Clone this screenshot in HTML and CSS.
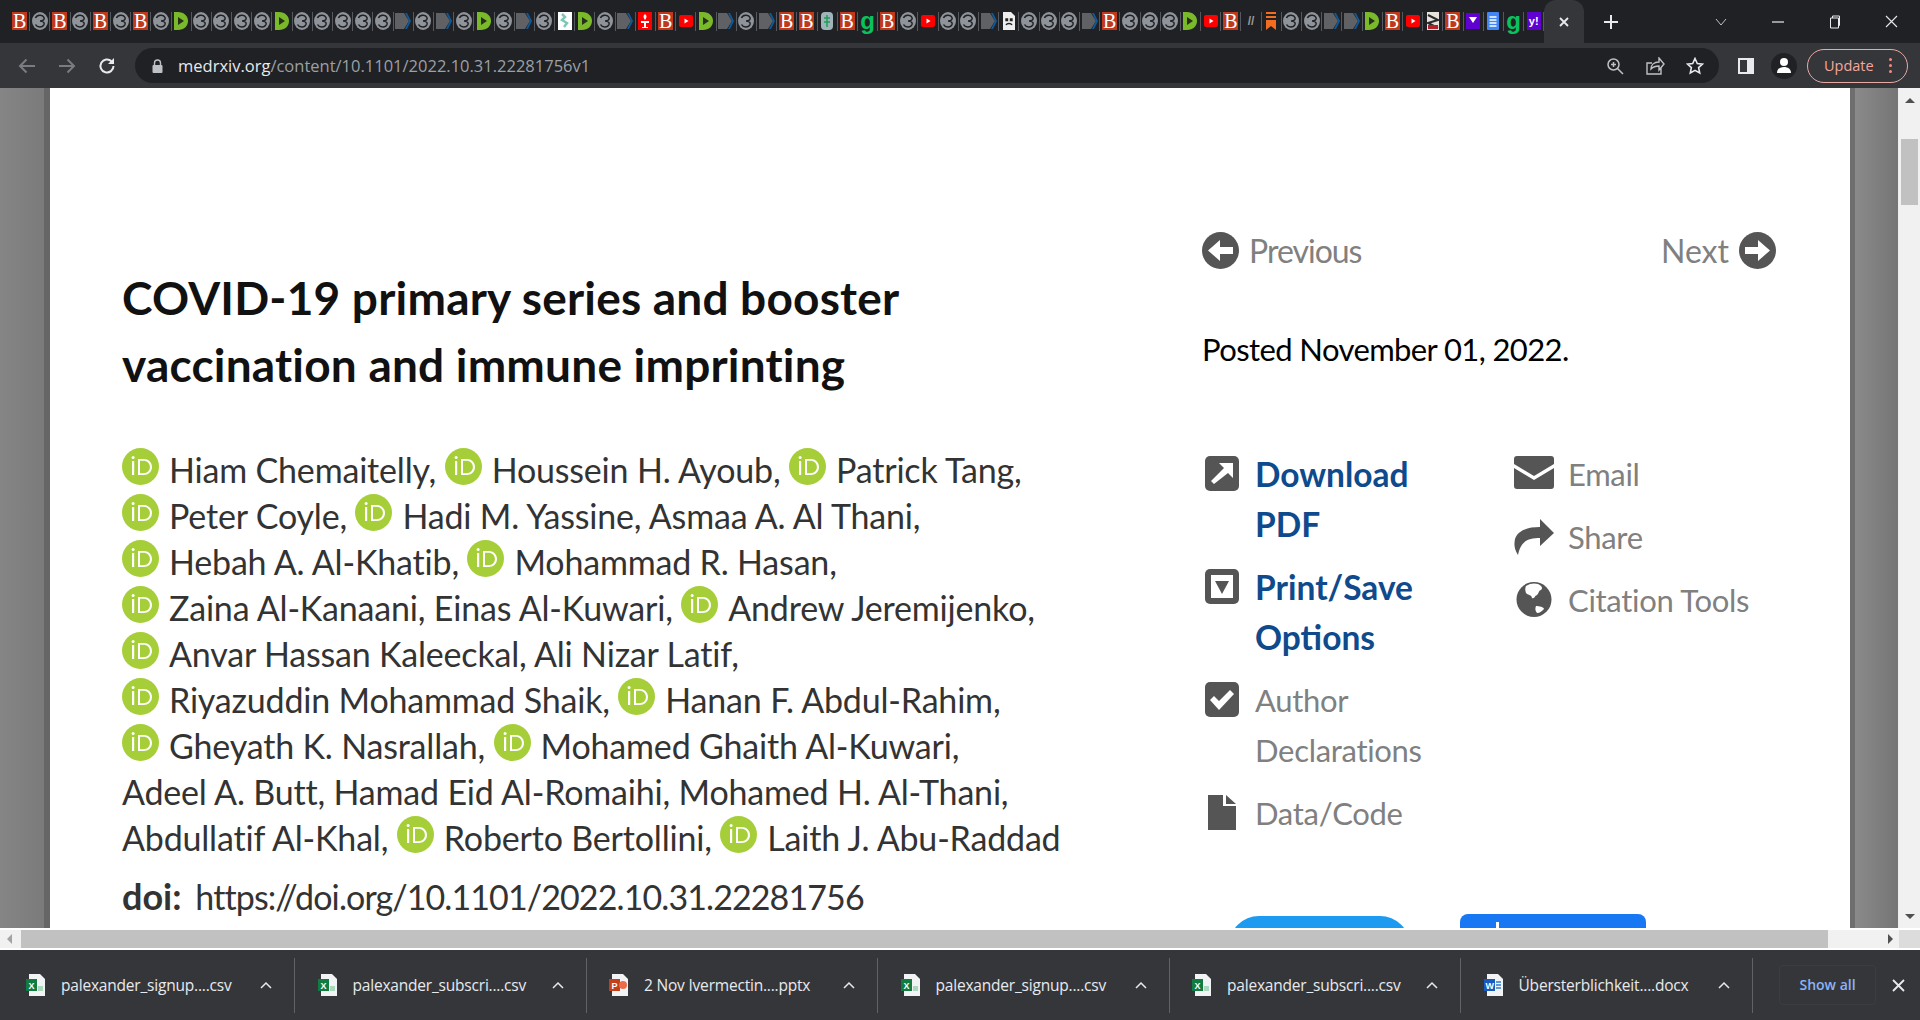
FILE: index.html
```html
<!DOCTYPE html>
<html lang="en">
<head>
  <meta charset="UTF-8" />
  <title>COVID-19 primary series and booster vaccination and immune imprinting</title>
  <link rel="stylesheet" href="styles.css">
</head>
<body>
  <svg class="defs" width="0" height="0">
    <symbol id="swirl" viewBox="0 0 16 18">
      <ellipse cx="8" cy="9" rx="8" ry="9" fill="#8f939a"/>
      <path d="M3.500 6c1-3 7-4 8.500-.5.800 2-1 3.500-4 3.500 3 0 4.800 1.500 4 3.500C10.500 16 5 15.500 3.500 12.500" fill="none" stroke="#202124" stroke-width="1.500"/>
    </symbol>
    <symbol id="dgreen" viewBox="0 0 16 18">
      <path d="M1 0h4c6 0 10 4 10 9s-4 9-10 9H1z" fill="#7ab929"/>
      <path d="M5 5l6 4-6 4z" fill="#26301a"/>
    </symbol>
    <symbol id="chev" viewBox="0 0 16 18">
      <path d="M0 1h9l5 8-5 8H0z" fill="#5f6164"/>
      <path d="M10 1h2l4 8-4 8h-2l4-8z" fill="#0e5a9a"/>
    </symbol>
    <symbol id="yt" viewBox="0 0 16 18">
      <rect x="1" y="3" width="14" height="12" rx="2" fill="#f00"/>
      <path d="M6.500 6.500l4 2.500-4 2.500z" fill="#fff"/>
    </symbol>
    <symbol id="orcid" viewBox="0 0 37 37">
      <circle cx="18.500" cy="18.500" r="18.500" fill="#a6ce39"/>
      <rect x="10" y="13" width="2.200" height="14" fill="#fff"/>
      <circle cx="11.100" cy="9.500" r="1.500" fill="#fff"/>
      <path d="M16 11h5.500c5 0 8.500 3.500 8.500 8s-3.500 8-8.500 8H16zM18 12.800v12.400h3.300c3.900 0 6.600-2.600 6.600-6.200s-2.700-6.200-6.600-6.200z" fill="#fff"/>
    </symbol>
    <symbol id="xls" viewBox="0 0 20 22">
      <path d="M3 0h11l5 5v17H3z" fill="#f1f3f4"/>
      <rect x="0" y="5" width="11" height="12" fill="#107c41"/>
      <path d="M12 12h5v5h-5z" fill="#a9d8bd"/>
    </symbol>
    <symbol id="caret" viewBox="0 0 12 8">
      <path d="M1 7l5-5 5 5" fill="none" stroke="#e8eaed" stroke-width="1.500"/>
    </symbol>
  </svg>

  <div class="tabstrip">
    <div class="favs">
      <span class="fav"><b class="ico-b">B</b></span><span class="fav"><svg><use href="#swirl"/></svg></span>
      <span class="fav"><b class="ico-b">B</b></span><span class="fav"><svg><use href="#swirl"/></svg></span>
      <span class="fav"><b class="ico-b">B</b></span><span class="fav"><svg><use href="#swirl"/></svg></span>
      <span class="fav"><b class="ico-b">B</b></span><span class="fav"><svg><use href="#swirl"/></svg></span>
      <span class="fav"><svg><use href="#dgreen"/></svg></span><span class="fav"><svg><use href="#swirl"/></svg></span>
      <span class="fav"><svg><use href="#swirl"/></svg></span><span class="fav"><svg><use href="#swirl"/></svg></span>
      <span class="fav"><svg><use href="#swirl"/></svg></span><span class="fav"><svg><use href="#dgreen"/></svg></span>
      <span class="fav"><svg><use href="#swirl"/></svg></span><span class="fav"><svg><use href="#swirl"/></svg></span>
      <span class="fav"><svg><use href="#swirl"/></svg></span><span class="fav"><svg><use href="#swirl"/></svg></span>
      <span class="fav"><svg><use href="#swirl"/></svg></span><span class="fav"><svg><use href="#chev"/></svg></span>
      <span class="fav"><svg><use href="#swirl"/></svg></span><span class="fav"><svg><use href="#chev"/></svg></span>
      <span class="fav"><svg><use href="#swirl"/></svg></span><span class="fav"><svg><use href="#dgreen"/></svg></span>
      <span class="fav"><svg><use href="#swirl"/></svg></span><span class="fav"><svg><use href="#chev"/></svg></span>
      <span class="fav"><svg><use href="#swirl"/></svg></span>
      <span class="fav"><svg viewBox="0 0 16 18"><rect x="1" y="0" width="14" height="18" fill="#fff"/><path d="M5 2l3 3-3 3 5 3-3 4" fill="none" stroke="#7cc8b4" stroke-width="2.500"/></svg></span>
      <span class="fav"><svg><use href="#dgreen"/></svg></span><span class="fav"><svg><use href="#swirl"/></svg></span>
      <span class="fav"><svg><use href="#chev"/></svg></span>
      <span class="fav"><svg viewBox="0 0 16 18"><rect x="1" y="0" width="14" height="18" fill="#f00"/><path d="M8 2c2 2 2 3 0 6-2-3-2-4 0-6zM4 9h8v2H9v4h2v1H5v-1h2v-4H4z" fill="#fff"/></svg></span>
      <span class="fav"><b class="ico-b">B</b></span><span class="fav"><svg><use href="#yt"/></svg></span>
      <span class="fav"><svg><use href="#dgreen"/></svg></span><span class="fav"><svg><use href="#chev"/></svg></span>
      <span class="fav"><svg><use href="#swirl"/></svg></span><span class="fav"><svg><use href="#chev"/></svg></span>
      <span class="fav"><b class="ico-b">B</b></span><span class="fav"><b class="ico-b">B</b></span>
      <span class="fav"><svg viewBox="0 0 16 18"><rect x="2" y="0" width="12" height="18" rx="4" fill="#9fb4bb"/><path d="M8 3v12M5 6h6M5 10h6" stroke="#1f9d55" stroke-width="1.500"/></svg></span>
      <span class="fav"><b class="ico-b">B</b></span><span class="fav"><b class="ico-g">g</b></span>
      <span class="fav"><b class="ico-b">B</b></span><span class="fav"><svg><use href="#swirl"/></svg></span>
      <span class="fav"><svg><use href="#yt"/></svg></span><span class="fav"><svg><use href="#swirl"/></svg></span>
      <span class="fav"><svg><use href="#swirl"/></svg></span><span class="fav"><svg><use href="#chev"/></svg></span>
      <span class="fav"><svg viewBox="0 0 16 18"><path d="M2 0h8l4 4v14H2z" fill="#eee"/><path d="M5 7h1.500v1.500H5zM9.500 7H11v1.500H9.500zM5 13c1-2 5-2 6 0" fill="none" stroke="#222" stroke-width="1.400"/></svg></span>
      <span class="fav"><svg><use href="#swirl"/></svg></span><span class="fav"><svg><use href="#swirl"/></svg></span>
      <span class="fav"><svg><use href="#swirl"/></svg></span><span class="fav"><svg><use href="#chev"/></svg></span>
      <span class="fav"><b class="ico-b">B</b></span><span class="fav"><svg><use href="#swirl"/></svg></span>
      <span class="fav"><svg><use href="#swirl"/></svg></span><span class="fav"><svg><use href="#swirl"/></svg></span>
      <span class="fav"><svg><use href="#dgreen"/></svg></span><span class="fav"><svg><use href="#yt"/></svg></span>
      <span class="fav"><b class="ico-b">B</b></span><span class="fav"><i class="ico-w">//</i></span>
      <span class="fav"><svg viewBox="0 0 16 18"><path d="M3 0h10v2H3zM3 4h10v2H3zM3 8h10v10l-5-4-5 4z" fill="#f26d21"/></svg></span>
      <span class="fav"><svg><use href="#swirl"/></svg></span><span class="fav"><svg><use href="#swirl"/></svg></span>
      <span class="fav"><svg><use href="#chev"/></svg></span><span class="fav"><svg><use href="#chev"/></svg></span>
      <span class="fav"><svg><use href="#dgreen"/></svg></span><span class="fav"><b class="ico-b">B</b></span>
      <span class="fav"><svg><use href="#yt"/></svg></span>
      <span class="fav"><svg viewBox="0 0 16 18"><rect x="2" y="0" width="12" height="18" fill="#e8e2dc"/><path d="M3 3l10 5-10 3 10 5" fill="none" stroke="#2a2a2a" stroke-width="2"/><rect x="3" y="13" width="10" height="4" fill="#b3202a"/></svg></span>
      <span class="fav"><b class="ico-b">B</b></span>
      <span class="fav"><svg viewBox="0 0 16 18"><rect x="1" y="1" width="14" height="16" fill="#5f01d1"/><path d="M4 5h8l-4 6z" fill="#fff"/></svg></span>
      <span class="fav"><svg viewBox="0 0 16 18"><rect x="2" y="0" width="12" height="18" rx="1" fill="#4285f4"/><path d="M4.500 5h7M4.500 8h7M4.500 11h7M4.500 14h7" stroke="#fff" stroke-width="1.500"/></svg></span>
      <span class="fav"><b class="ico-g">g</b></span><span class="fav"><b class="ico-y">y!</b></span>
    </div>
    <div class="active-tab">
      <svg width="12" height="12" viewBox="0 0 12 12"><path d="M2 2l8 8M10 2l-8 8" stroke="#e8eaed" stroke-width="1.800"/></svg>
    </div>
    <svg class="new-tab" width="16" height="16" viewBox="0 0 16 16"><path d="M8 1v14M1 8h14" stroke="#e8eaed" stroke-width="2"/></svg>
    <div class="win-btns">
      <span class="win-btn"><svg width="12" height="8" viewBox="0 0 12 8"><path d="M1 1l5 6 5-6" fill="none" stroke="#bdc1c6"/></svg></span>
      <span class="win-btn"><svg width="12" height="2" viewBox="0 0 12 2"><path d="M0 1h12" stroke="#e8eaed" stroke-width="1.200"/></svg></span>
      <span class="win-btn"><svg width="12" height="14" viewBox="0 0 12 14"><path d="M1.500 3h8v10h-8zM3.500 3V1h7v9.500H9.500" fill="none" stroke="#e8eaed"/></svg></span>
      <span class="win-btn"><svg width="13" height="13" viewBox="0 0 13 13"><path d="M1 1l11 11M12 1L1 12" stroke="#e8eaed" stroke-width="1.100"/></svg></span>
    </div>
  </div>

  <div class="toolbar">
    <svg class="nav-ico" width="18" height="16" viewBox="0 0 18 16"><path d="M17 8H2M8.500 1.500L2 8l6.500 6.500" fill="none" stroke="#797c80" stroke-width="2"/></svg>
    <svg class="nav-ico" width="18" height="16" viewBox="0 0 18 16"><path d="M1 8h15M9.500 1.500L16 8l-6.500 6.500" fill="none" stroke="#797c80" stroke-width="2"/></svg>
    <svg class="nav-ico" width="18" height="18" viewBox="0 0 18 18"><path d="M15.500 9a6.500 6.500 0 1 1-2-4.700" fill="none" stroke="#e8eaed" stroke-width="2"/><path d="M16 1v6h-6z" fill="#e8eaed"/></svg>
    <div class="omnibox">
      <svg width="11" height="14" viewBox="0 0 11 14"><path d="M2.500 6V4a3 3 0 0 1 6 0v2" fill="none" stroke="#bdc1c6" stroke-width="1.400"/><rect x="0.500" y="6" width="10" height="8" rx="1" fill="#bdc1c6"/></svg>
      <span class="url"><span class="host">medrxiv.org</span>/content/10.1101/2022.10.31.22281756v1</span>
      <span class="omni-icons">
        <svg width="18" height="18" viewBox="0 0 18 18"><circle cx="7.500" cy="7.500" r="5.500" fill="none" stroke="#bdc1c6" stroke-width="1.500"/><path d="M11.500 11.500L17 17M5 7.500h5M7.500 5v5" stroke="#bdc1c6" stroke-width="1.500"/></svg>
        <svg width="20" height="18" viewBox="0 0 20 18"><path d="M16 11v6H2V6h5M6 12c0-4 3-7 8-7V1l5 6-5 6V9c-4 0-6 1-8 3z" fill="none" stroke="#bdc1c6" stroke-width="1.400"/></svg>
        <svg width="18" height="18" viewBox="0 0 18 18"><path d="M9 1.500l2.300 5 5.200.6-3.900 3.500 1.100 5.400L9 13.300 4.300 16l1.100-5.400L1.500 7.100l5.200-.6z" fill="none" stroke="#e8eaed" stroke-width="1.600"/></svg>
      </span>
    </div>
    <div class="tool-icons">
      <svg width="16" height="16" viewBox="0 0 16 16"><path d="M1 1h14v14H1z" fill="none" stroke="#e8eaed" stroke-width="2"/><path d="M9 1h6v14H9z" fill="#e8eaed"/></svg>
      <span class="avatar"><svg width="16" height="18" viewBox="0 0 16 18"><circle cx="8" cy="5" r="4" fill="#fff"/><path d="M1 16c0-4 3-6 7-6s7 2 7 6z" fill="#fff"/></svg></span>
      <span class="update">Update<i class="dots"><i></i><i></i><i></i></i></span>
    </div>
  </div>

  <div class="page-row">
    <div class="page-bg">
      <div class="sheet">
        <div class="article">
          <h1 class="title">COVID-19 primary series and booster<br>vaccination and immune imprinting</h1>
          <div class="authors">
            <svg class="orcid"><use href="#orcid"/></svg>Hiam Chemaitelly, <svg class="orcid"><use href="#orcid"/></svg>Houssein H. Ayoub, <svg class="orcid"><use href="#orcid"/></svg>Patrick Tang,<br>
            <svg class="orcid"><use href="#orcid"/></svg>Peter Coyle, <svg class="orcid"><use href="#orcid"/></svg>Hadi M. Yassine, Asmaa A. Al Thani,<br>
            <svg class="orcid"><use href="#orcid"/></svg>Hebah A. Al-Khatib, <svg class="orcid"><use href="#orcid"/></svg>Mohammad R. Hasan,<br>
            <svg class="orcid"><use href="#orcid"/></svg>Zaina Al-Kanaani, Einas Al-Kuwari, <svg class="orcid"><use href="#orcid"/></svg>Andrew Jeremijenko,<br>
            <svg class="orcid"><use href="#orcid"/></svg>Anvar Hassan Kaleeckal, Ali Nizar Latif,<br>
            <svg class="orcid"><use href="#orcid"/></svg>Riyazuddin Mohammad Shaik, <svg class="orcid"><use href="#orcid"/></svg>Hanan F. Abdul-Rahim,<br>
            <svg class="orcid"><use href="#orcid"/></svg>Gheyath K. Nasrallah, <svg class="orcid"><use href="#orcid"/></svg>Mohamed Ghaith Al-Kuwari,<br>
            Adeel A. Butt, Hamad Eid Al-Romaihi, Mohamed H. Al-Thani,<br>
            Abdullatif Al-Khal, <svg class="orcid"><use href="#orcid"/></svg>Roberto Bertollini, <svg class="orcid"><use href="#orcid"/></svg>Laith J. Abu-Raddad
          </div>
          <div class="doi"><b>doi:</b> https://doi.org/10.1101/2022.10.31.22281756</div>
        </div>

        <div class="side">
          <div class="pager">
            <span class="pager-link prev">
              <svg width="37" height="37" viewBox="0 0 37 37"><circle cx="18.500" cy="18.500" r="18.500" fill="#555"/><path d="M31 15v7H18v7L6 18.500 18 8v7z" fill="#fff"/></svg>
              Previous
            </span>
            <span class="pager-link">
              Next
              <svg width="37" height="37" viewBox="0 0 37 37"><circle cx="18.500" cy="18.500" r="18.500" fill="#555"/><path d="M6 15v7h13v7l12-10.500L19 8v7z" fill="#fff"/></svg>
            </span>
          </div>
          <div class="posted">Posted November 01, 2022.</div>

          <div class="links">
            <div class="links-col">
              <div class="link-item strong">
                <svg width="34" height="35" viewBox="0 0 34 35"><rect width="34" height="35" rx="5" fill="#555"/><path d="M9 28l-3-3 13-13-5-5h14v15l-5-5z" fill="#fff"/></svg>
                <span>Download<br>PDF</span>
              </div>
              <div class="link-item strong">
                <svg width="34" height="35" viewBox="0 0 34 35"><rect width="34" height="35" rx="5" fill="#555"/><rect x="6" y="6" width="22" height="23" fill="#fff"/><path d="M10 12h14l-7 13z" fill="#555"/></svg>
                <span>Print/Save<br>Options</span>
              </div>
              <div class="link-item">
                <svg width="34" height="35" viewBox="0 0 34 35"><rect width="34" height="35" rx="5" fill="#555"/><path d="M5 18l4-4 5 5L25 8l4 4-15 16z" fill="#fff"/></svg>
                <span>Author<br>Declarations</span>
              </div>
              <div class="link-item">
                <svg width="34" height="35" viewBox="0 0 34 35"><path d="M3 0h15v11h13v24H3z" fill="#555"/><path d="M21 0l10 9H21z" fill="#555"/></svg>
                <span>Data/Code</span>
              </div>
            </div>
            <div class="side-col">
              <div class="link-item">
                <svg width="40" height="33" viewBox="0 0 40 33"><path d="M3 0h34a3 3 0 0 1 3 3v5L20 20 0 8V3a3 3 0 0 1 3-3z" fill="#555"/><path d="M0 12l20 12 20-12v18a3 3 0 0 1-3 3H3a3 3 0 0 1-3-3z" fill="#555"/></svg>
                <span>Email</span>
              </div>
              <div class="link-item">
                <svg width="40" height="36" viewBox="0 0 40 36"><path d="M26 0l14 14-14 13v-8C14 19 7 22 4 36 0 30 0 25 1 20 4 11 14 8 26 8z" fill="#555"/></svg>
                <span>Share</span>
              </div>
              <div class="link-item">
                <svg width="40" height="35" viewBox="0 0 40 35"><circle cx="20" cy="17.500" r="17.500" fill="#555"/><path d="M12 4c4-3 9-3 12-2 4 2 5 4 3 6-2 0-2 3-4 5-3 1-2 4-5 3-1-4-3-2-6-5-1-3-1-5 0-7zM22 24c3 0 8 1 8 3-2 2-4 4-7 4-2-2-2-5-1-7z" fill="#fff"/></svg>
                <span>Citation Tools</span>
              </div>
            </div>
          </div>

          <div class="social">
            <span class="btn-twitter"></span>
            <span class="btn-fb"><i></i></span>
          </div>
        </div>
      </div>
    </div>
    <div class="vscroll">
      <i class="arrow-up"></i>
      <i class="vthumb"></i>
      <i class="arrow-down"></i>
    </div>
  </div>

  <div class="hscroll">
    <div class="htrack">
      <i class="arrow-left"></i>
      <i class="hthumb"></i>
      <i class="arrow-right"></i>
    </div>
    <div class="corner"></div>
  </div>

  <div class="downloads">
    <div class="dl-item">
      <svg class="dl-ico" viewBox="0 0 20 22"><use href="#xls"/><text x="2.500" y="14.500" class="dl-letter">X</text></svg>
      <span class="dl-name">palexander_signup....csv</span>
      <svg class="dl-caret"><use href="#caret"/></svg>
    </div>
    <div class="dl-item">
      <svg class="dl-ico" viewBox="0 0 20 22"><use href="#xls"/><text x="2.500" y="14.500" class="dl-letter">X</text></svg>
      <span class="dl-name">palexander_subscri....csv</span>
      <svg class="dl-caret"><use href="#caret"/></svg>
    </div>
    <div class="dl-item">
      <svg class="dl-ico" viewBox="0 0 20 22"><path d="M3 0h11l5 5v17H3z" fill="#f1f3f4"/><rect x="0" y="5" width="11" height="12" fill="#c43e1c"/><text x="2.500" y="14.500" class="dl-letter">P</text><circle cx="14" cy="11" r="4" fill="#ed6c47"/></svg>
      <span class="dl-name">2 Nov Ivermectin....pptx</span>
      <svg class="dl-caret"><use href="#caret"/></svg>
    </div>
    <div class="dl-item">
      <svg class="dl-ico" viewBox="0 0 20 22"><use href="#xls"/><text x="2.500" y="14.500" class="dl-letter">X</text></svg>
      <span class="dl-name">palexander_signup....csv</span>
      <svg class="dl-caret"><use href="#caret"/></svg>
    </div>
    <div class="dl-item">
      <svg class="dl-ico" viewBox="0 0 20 22"><use href="#xls"/><text x="2.500" y="14.500" class="dl-letter">X</text></svg>
      <span class="dl-name">palexander_subscri....csv</span>
      <svg class="dl-caret"><use href="#caret"/></svg>
    </div>
    <div class="dl-item">
      <svg class="dl-ico" viewBox="0 0 20 22"><path d="M3 0h11l5 5v17H3z" fill="#f1f3f4"/><rect x="0" y="5" width="11" height="12" fill="#185abd"/><text x="1.500" y="14.500" class="dl-letter">W</text><path d="M12 8h5M12 11h5M12 14h5" stroke="#2b7cd3" stroke-width="1.500"/></svg>
      <span class="dl-name">Übersterblichkeit....docx</span>
      <svg class="dl-caret"><use href="#caret"/></svg>
    </div>
    <div class="dl-end">
      <span class="show-all">Show all</span>
      <svg width="13" height="13" viewBox="0 0 13 13"><path d="M1 1l11 11M12 1L1 12" stroke="#e8eaed" stroke-width="1.800"/></svg>
    </div>
  </div>
</body>
</html>
```
FILE: styles.css
```css
* {
  box-sizing: border-box;
  margin: 0;
  padding: 0;
}

html, body {
  height: 100%;
  overflow: hidden;
}

body {
  display: flex;
  flex-direction: column;
  background: #202124;
  font-family: Lato, 'Open Sans', sans-serif;
}

.defs {
  position: absolute;
}

/* tab strip */
.tabstrip {
  display: flex;
  align-items: stretch;
  height: 43px;
  padding-left: 10px;
  background: #202124;
  flex-shrink: 0;
}

.favs {
  display: flex;
  width: 1534px;
  align-items: center;
}

.fav {
  display: flex;
  flex: 1 1 0;
  min-width: 0;
  height: 19px;
  margin-top: -1px;
  align-items: center;
  justify-content: center;
  border-right: 1px solid #55585c;
}

.fav svg {
  width: 16px;
  height: 18px;
}

.ico-b {
  display: block;
  width: 15px;
  height: 18px;
  background: #c0391c;
  color: #fff;
  font: 400 20px/18px 'Liberation Serif', serif;
  text-align: center;
}

.ico-g {
  color: #0bc15f;
  font: 700 24px/14px 'Liberation Sans', sans-serif;
}

.ico-y {
  display: block;
  width: 14px;
  height: 18px;
  background: #5f01d1;
  color: #fff;
  font: 700 11px/18px 'Liberation Sans', sans-serif;
  text-align: center;
}

.ico-w {
  color: #999;
  font: 700 12px/18px 'Liberation Sans', sans-serif;
}

.active-tab {
  display: flex;
  width: 40px;
  align-items: center;
  justify-content: center;
  background: #35363a;
  border-radius: 12px 12px 0 0;
}

.new-tab {
  margin: 14px 0 0 19px;
}

.win-btns {
  display: flex;
  margin-left: auto;
}

.win-btn {
  display: flex;
  width: 57px;
  align-items: center;
  justify-content: center;
}

/* toolbar */
.toolbar {
  display: flex;
  align-items: center;
  height: 45px;
  padding-left: 18px;
  background: #35363a;
  flex-shrink: 0;
}

.nav-ico {
  margin-right: 22px;
}

.omnibox {
  display: flex;
  align-items: center;
  width: 1584px;
  height: 35px;
  margin-left: -3px;
  padding: 0 15px 0 17px;
  background: #202124;
  border-radius: 18px;
  color: #9aa0a6;
  font: 16.500px 'Open Sans', sans-serif;
}

.url {
  margin-left: 15px;
}

.host {
  color: #e8eaed;
}

.omni-icons {
  display: flex;
  align-items: center;
  gap: 21px;
  margin-left: auto;
}

.tool-icons {
  display: flex;
  align-items: center;
  flex: 1;
  padding-left: 19px;
}

.avatar {
  display: flex;
  width: 26px;
  height: 26px;
  margin-left: 17px;
  align-items: center;
  justify-content: center;
  background: #202124;
  border-radius: 50%;
}

.update {
  display: flex;
  align-items: center;
  width: 101px;
  height: 34px;
  margin-left: 10px;
  padding-left: 16px;
  border: 1px solid #eba9a3;
  border-radius: 17px;
  color: #f4a79f;
  font: 14.500px 'Open Sans', sans-serif;
}

.dots {
  display: flex;
  flex-direction: column;
  gap: 3px;
  margin-left: 15px;
}

.dots i {
  width: 3px;
  height: 3px;
  background: #f28b82;
  border-radius: 50%;
}

/* page */
.page-row {
  display: flex;
  height: 840px;
  flex-shrink: 0;
}

.page-bg {
  flex: 1;
  padding: 0 49px 0 50px;
  background: linear-gradient(90deg, #858585 0, #7b7b7b 44px, #666 44px, #666 50px, #fff 50px, #fff 1850px, #6e6e6e 1850px, #6e6e6e 1855px, #8a8a8a 1855px, #757575 1898px, #eee 1898px);
  overflow: hidden;
}

.sheet {
  display: flex;
  height: 100%;
  padding-left: 72px;
  background: #fff;
  overflow: hidden;
}

.article {
  width: 1080px;
  padding-top: 176px;
}

.title {
  color: #111;
  font-size: 46px;
  font-weight: 700;
  line-height: 67px;
  letter-spacing: 0.2px;
}

.authors {
  margin-top: 49px;
  color: #333;
  font-size: 34px;
  line-height: 46px;
  letter-spacing: -0.18px;
}

.orcid {
  width: 37px;
  height: 37px;
  margin-right: 10px;
  vertical-align: -2px;
}

.doi {
  margin-top: 12px;
  color: #333;
  font-size: 34px;
  line-height: 46px;
  letter-spacing: -0.9px;
}

.doi b {
  margin-right: 6px;
  font-size: 36px;
  letter-spacing: 0;
}

.side {
  width: 574px;
  padding-top: 143px;
}

.pager {
  display: flex;
  justify-content: space-between;
  color: #808080;
  font-size: 32px;
}

.pager-link {
  display: flex;
  align-items: center;
  gap: 10px;
}

.prev {
  letter-spacing: -1px;
}

.posted {
  margin-top: 56px;
  color: #000;
  font-size: 31px;
  line-height: 46px;
  letter-spacing: -0.6px;
}

.links {
  display: flex;
  margin-top: 77px;
  padding-left: 3px;
}

.links-col {
  width: 309px;
  flex-shrink: 0;
}

.side-col {
  flex: 1;
}

.link-item {
  display: flex;
  align-items: flex-start;
  gap: 16px;
  margin-bottom: 13px;
  color: #808080;
  font-size: 31px;
  line-height: 50px;
  letter-spacing: -0.3px;
}

.link-item svg {
  flex-shrink: 0;
  margin-top: 7px;
}

.link-item.strong {
  color: #0f4a8c;
  font-size: 33.500px;
  font-weight: 700;
  letter-spacing: 0;
}

.side-col .link-item {
  gap: 14px;
}

.social {
  display: flex;
  gap: 50px;
  margin-top: 63px;
  padding-left: 27px;
  align-items: flex-start;
}

.btn-twitter {
  width: 181px;
  height: 40px;
  margin-top: 2px;
  background: #1d9bf0;
  border-radius: 30px 30px 0 0;
}

.btn-fb {
  display: block;
  position: relative;
  width: 186px;
  height: 40px;
  background: #1877f2;
  border-radius: 8px;
}

.btn-fb i {
  position: absolute;
  left: 36px;
  top: 8px;
  width: 3px;
  height: 10px;
  background: #fff;
}

/* scrollbars */
.vscroll {
  position: relative;
  width: 21px;
  background: #f1f1f1;
}

.vthumb {
  position: absolute;
  left: 2px;
  top: 51px;
  width: 17px;
  height: 66px;
  background: #c1c1c1;
}

.arrow-up,
.arrow-down {
  position: absolute;
  left: 6px;
  border-left: 5px solid transparent;
  border-right: 5px solid transparent;
}

.arrow-up {
  top: 10px;
  border-bottom: 5px solid #505050;
}

.arrow-down {
  bottom: 9px;
  border-top: 5px solid #505050;
}

.hscroll {
  display: flex;
  height: 22px;
  padding: 2px 0;
  background: #fff;
  flex-shrink: 0;
}

.htrack {
  position: relative;
  flex: 1;
  background: #f1f1f1;
}

.hthumb {
  position: absolute;
  left: 21px;
  top: 0;
  width: 1807px;
  height: 100%;
  background: #c1c1c1;
}

.arrow-left,
.arrow-right {
  position: absolute;
  top: 4px;
  border-top: 5px solid transparent;
  border-bottom: 5px solid transparent;
}

.arrow-left {
  left: 7px;
  border-right: 5px solid #a3a3a3;
}

.arrow-right {
  right: 6px;
  border-left: 5px solid #505050;
}

.corner {
  width: 21px;
  background: #dcdcdc;
}

/* download bar */
.downloads {
  display: flex;
  flex: 1;
  align-items: center;
  padding-left: 3.500px;
  background: #35363a;
}

.dl-item {
  display: flex;
  align-items: center;
  width: 291.500px;
  height: 55px;
  padding-left: 22.500px;
  border-right: 1px solid #5f6368;
  color: #e8eaed;
  font: 15.500px 'Open Sans', sans-serif;
}

.dl-ico {
  width: 20px;
  height: 22px;
  flex-shrink: 0;
}

.dl-letter {
  fill: #fff;
  font: 700 9px 'Liberation Sans', sans-serif;
}

.dl-name {
  width: 199px;
  margin-left: 15px;
  letter-spacing: -0.2px;
  white-space: nowrap;
}

.dl-caret {
  width: 12px;
  height: 8px;
}

.dl-end {
  display: flex;
  align-items: center;
  flex: 1;
  padding-left: 26.500px;
}

.show-all {
  width: 97px;
  height: 40px;
  margin-right: 16px;
  border: 1px solid #3c3d41;
  border-radius: 4px;
  color: #8ab4f8;
  font: 600 14px/38px 'Open Sans', sans-serif;
  text-align: center;
}
```
